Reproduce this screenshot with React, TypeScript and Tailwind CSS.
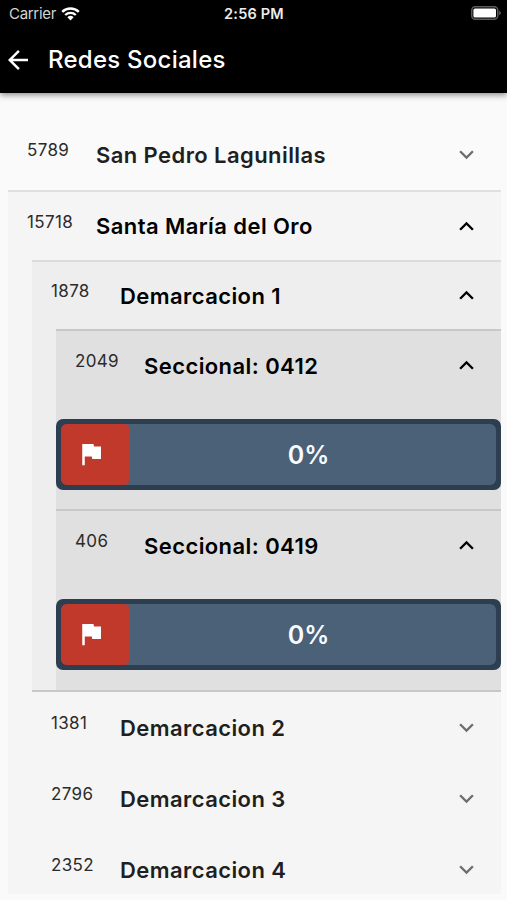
import type { FC, ReactNode } from 'react';
import { MdArrowBack, MdExpandLess, MdExpandMore, MdFlag } from 'react-icons/md';

const StatusBar: FC = () => (
  <div className="grid h-7 grid-cols-3 items-center pl-[9px] pr-[6px] text-white">
    <div className="flex items-center gap-[5px] pb-px">
      <span className="text-[15px] leading-none tracking-[-0.3px] text-[#d4d4d4]">Carrier</span>
      <svg className="h-[14px] w-[19px]" viewBox="0 0 19 14" fill="none" stroke="white">
        <path d="M1.2 4.9a12 12 0 0 1 16.6 0" strokeWidth="2.5" />
        <path d="M4.2 8a7.7 7.7 0 0 1 10.6 0" strokeWidth="2.4" />
        <path d="M9.5 13.5 6.4 10.3a4.5 4.5 0 0 1 6.2 0z" fill="white" stroke="none" />
      </svg>
    </div>
    <span className="pr-[2px] text-center text-[14.5px] font-semibold leading-none tracking-[0.2px] text-[#ececec]">
      2:56 PM
    </span>
    <svg className="mb-[2px] h-[14px] w-[30px] justify-self-end" viewBox="0 0 30 14">
      <rect x="0.75" y="0.75" width="26" height="12.5" rx="3.5" fill="none" stroke="#5c5c5c" strokeWidth="1.5" />
      <rect x="2.4" y="2.4" width="22.6" height="9.2" rx="1.6" fill="white" />
      <path d="M28.2 4.8c2 .8 2 3.6 0 4.4z" fill="#6b6b6b" />
    </svg>
  </div>
);

const Header: FC = () => (
  <header className="relative h-[93px] bg-black shadow-[0_2px_6px_rgba(0,0,0,0.45)]">
    <StatusBar />
    <div className="flex h-[64px] items-center pl-[3px] text-white">
      <MdArrowBack className="h-[30px] w-[30px]" />
      <h1 className="ml-[15px] text-[24px] font-medium leading-none tracking-[0.25px]">Redes Sociales</h1>
    </div>
  </header>
);

type RowProps = {
  count: number;
  title: string;
  open?: boolean;
  className?: string;
};

const Row: FC<RowProps> = ({ count, title, open, className = 'h-[71px]' }) => (
  <div className={`flex items-center pl-[19px] pr-5 ${className}`}>
    <span className="w-[69px] pb-[8px] text-[17px] leading-none tracking-[0.35px] text-[#2b2b2b]">{count}</span>
    <span
      className={`flex-1 text-[22px] font-semibold leading-none tracking-[0.42px] ${open ? 'text-black' : 'text-[#1f1f1f]'}`}
    >
      {title}
    </span>
    {open ? (
      <MdExpandLess className="h-[29px] w-[29px] text-black" />
    ) : (
      <MdExpandMore className="h-[29px] w-[29px] text-[#6e6e6e]" />
    )}
  </div>
);

const Progress: FC<{ value: number }> = ({ value }) => (
  <div className="flex h-[71px] rounded-[7px] border-[5px] border-[#2c3e50] bg-[#2c3e50]">
    <div className="flex flex-1 rounded-[6px] bg-[#4b6177]">
      <div className="flex w-[69px] items-center rounded-[6px] bg-[#c0392b] pl-[15px]">
        <MdFlag className="mb-px h-[30px] w-[30px] text-white" />
      </div>
      <div className="flex flex-1 items-center justify-center pr-[9px] pt-px text-[25px] font-semibold leading-none text-[#f7fbff]">
        {value}%
      </div>
    </div>
  </div>
);

const Section: FC<{ children: ReactNode; className: string }> = ({ children, className }) => (
  <div className={`border-t-2 border-[#c8c8c8] bg-[#e0e0e0] ${className}`}>{children}</div>
);

export default function App() {
  return (
    <div className="h-[900px] overflow-hidden bg-[#fafafa] font-['Inter',sans-serif]">
      <Header />
      <main className="ml-2 mr-[6px] pt-[26px]">
        <Row count={5789} title="San Pedro Lagunillas" />
        <div className="h-[704px] border-t-2 border-[#e0e0e0] bg-[#f5f5f5]">
          <Row count={15718} title="Santa María del Oro" open className="h-[68px]" />
          <div className="ml-6">
            <div className="border-t-2 border-[#dcdcdc] bg-[#eeeeee]">
              <Row count={1878} title="Demarcacion 1" open className="h-[67px]" />
              <div className="ml-6">
                <Section className="pb-[19px]">
                  <Row count={2049} title="Seccional: 0412" open className="mb-[19px] h-[69px]" />
                  <Progress value={0} />
                </Section>
                <Section className="pb-5">
                  <Row count={406} title="Seccional: 0419" open className="mb-[19px] h-[69px]" />
                  <Progress value={0} />
                </Section>
              </div>
            </div>
            <div className="border-t-2 border-[#c8c8c8]">
              <Row count={1381} title="Demarcacion 2" />
              <Row count={2796} title="Demarcacion 3" />
              <Row count={2352} title="Demarcacion 4" />
            </div>
          </div>
        </div>
      </main>
    </div>
  );
}
